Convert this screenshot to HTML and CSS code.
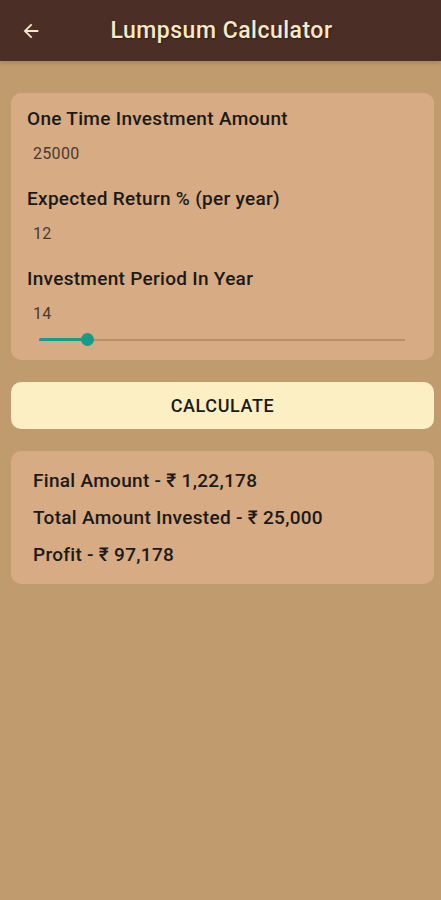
FILE: index.html
```html
<!DOCTYPE html>
<html lang="en">
<head>
    <meta charset="UTF-8">
    <meta name="viewport" content="width=device-width, initial-scale=1.0">
    <title>Lumpsum Calculator</title>
    <link rel="stylesheet" href="styles.css">
</head>
<body>
    <header class="app-bar">
        <button class="back-btn" aria-label="Back">
            <svg width="22" height="22" viewBox="0 0 24 24">
                <path d="M20 11H7.83l5.59-5.59L12 4l-8 8 8 8 1.41-1.41L7.83 13H20v-2z" fill="currentColor"/>
            </svg>
        </button>
        <h1 class="title">Lumpsum Calculator</h1>
    </header>

    <main class="content">
        <section class="card inputs">
            <div class="field">
                <label class="field-label">One Time Investment Amount</label>
                <div class="field-value">25000</div>
            </div>
            <div class="field">
                <label class="field-label">Expected Return % (per year)</label>
                <div class="field-value">12</div>
            </div>
            <div class="field">
                <label class="field-label">Investment Period In Year</label>
                <div class="field-value">14</div>
                <div class="slider">
                    <div class="slider-fill" style="width: 13%"></div>
                    <div class="slider-thumb"></div>
                </div>
            </div>
        </section>

        <button class="btn-calc">CALCULATE</button>

        <section class="card results">
            <p>Final Amount - ₹ 1,22,178</p>
            <p>Total Amount Invested - ₹ 25,000</p>
            <p>Profit - ₹ 97,178</p>
        </section>
    </main>
</body>
</html>
```

FILE: styles.css
```css
:root {
    --bar: #4b2f27;
    --bg: #bf9b6d;
    --card: #d7ab83;
    --cream: #f7e8c6;
    --button: #fbefc3;
    --teal: #179a88;
    --text-dark: #1c1a17;
}

* {
    box-sizing: border-box;
    margin: 0;
    padding: 0;
}

body {
    font-family: Roboto, "Noto Sans", sans-serif;
    background: var(--bg);
    color: var(--text-dark);
    min-height: 900px;
}

.app-bar {
    height: 61px;
    background: var(--bar);
    display: flex;
    align-items: center;
    box-shadow: 0 2px 4px rgba(0, 0, 0, 0.15);
}

.back-btn {
    background: none;
    border: none;
    color: var(--cream);
    width: 62px;
    height: 61px;
    display: flex;
    align-items: center;
    justify-content: center;
}

.title {
    flex: 1;
    text-align: center;
    margin-right: 60px;
    font-size: 23px;
    font-weight: 500;
    color: var(--cream);
    letter-spacing: 0.5px;
    text-shadow: 1px 1px 2px rgba(0, 0, 0, 0.45);
}

.content {
    padding: 32px 7px 0 11px;
    display: flex;
    flex-direction: column;
}

.card {
    background: var(--card);
    border-radius: 10px;
}

.inputs {
    padding: 14px 16px 10px 16px;
    display: flex;
    flex-direction: column;
    gap: 23px;
}

.field-label {
    display: block;
    font-size: 19px;
    font-weight: 500;
    line-height: 24px;
    letter-spacing: 0.3px;
    color: var(--text-dark);
}

.field-value {
    font-size: 16px;
    color: #4a3b30;
    line-height: 20px;
    letter-spacing: 0.3px;
    margin-top: 13px;
    padding-left: 6px;
}

.slider {
    position: relative;
    height: 20px;
    margin: 6px 13px 0 12px;
}

.slider::before {
    content: "";
    position: absolute;
    left: 0;
    right: 0;
    top: 9px;
    height: 2px;
    background: #b8916c;
}

.slider-fill {
    position: absolute;
    left: 0;
    top: 8px;
    height: 3px;
    background: var(--teal);
    border-radius: 2px;
}

.slider-thumb {
    position: absolute;
    left: 13%;
    top: 3px;
    width: 13px;
    height: 13px;
    margin-left: -6px;
    border-radius: 50%;
    background: var(--teal);
}

.btn-calc {
    margin-top: 22px;
    height: 47px;
    border: none;
    border-radius: 10px;
    background: var(--button);
    font-family: Roboto, "Noto Sans", sans-serif;
    font-size: 18px;
    font-weight: 500;
    color: var(--text-dark);
    letter-spacing: 0.6px;
}

.results {
    margin-top: 22px;
    padding: 18px 22px 17px 22px;
    display: flex;
    flex-direction: column;
    gap: 13px;
}

.results p {
    font-size: 19px;
    font-weight: 500;
    line-height: 24px;
    letter-spacing: 0.3px;
}
```
